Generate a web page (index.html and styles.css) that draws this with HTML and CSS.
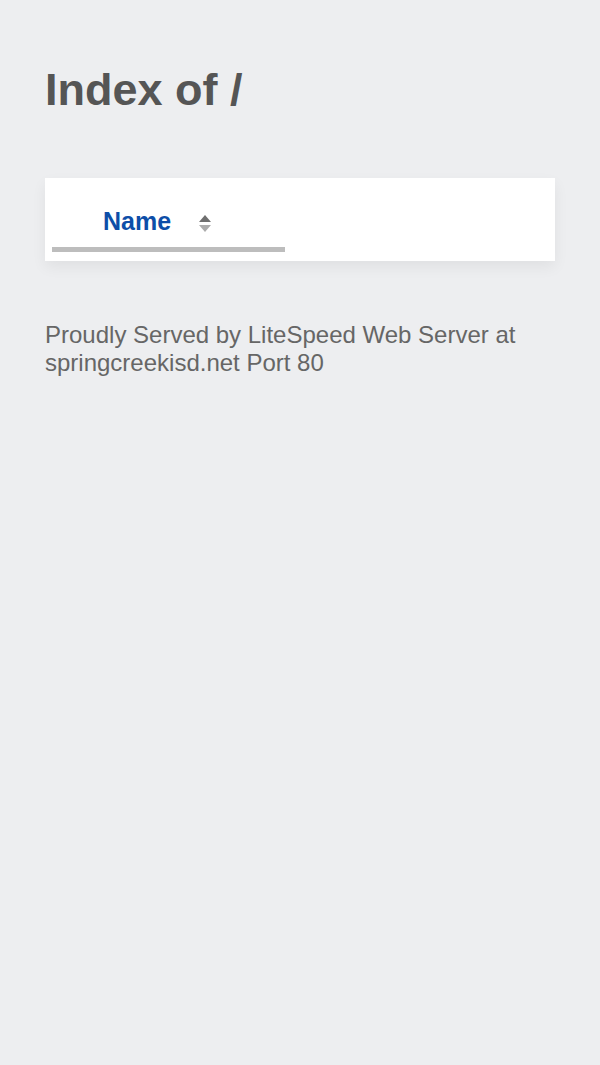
FILE: index.html
```html
<!DOCTYPE html>
<html lang="en">
<head>
    <meta charset="UTF-8">
    <meta name="viewport" content="width=device-width, initial-scale=1.0">
    <title>Index of /</title>
    <link rel="stylesheet" href="styles.css">
</head>
<body>

    <!-- Page heading -->
    <h1 class="page-title">Index of /</h1>

    <!-- Directory listing -->
    <div class="listing">
        <table class="listing-table">
            <thead>
                <tr>
                    <th class="col-name">
                        <a href="#" class="sort-link">
                            <span>Name</span>
                            <svg class="sort-icon" width="12" height="18" viewBox="0 0 12 18">
                                <polygon points="6,1 12,8 0,8" fill="#6f6f6f"/>
                                <polygon points="0,11 12,11 6,18" fill="#acacac"/>
                            </svg>
                        </a>
                    </th>
                </tr>
            </thead>
            <tbody></tbody>
        </table>
    </div>

    <!-- Server signature -->
    <p class="server-info">Proudly Served by LiteSpeed Web Server at springcreekisd.net Port 80</p>

</body>
</html>
```

FILE: styles.css
```css
/* General reset */
* {
    margin: 0;
    padding: 0;
    box-sizing: border-box;
}

:root {
    --background: #edeef0;
    --title: #555555;
    --link: #0d4ea8;
    --muted: #666666;
    --rule: #bdbdbd;
}

body {
    font-family: "Liberation Sans", Arial, sans-serif;
    background-color: var(--background);
    color: var(--muted);
    padding: 64px 45px 0 45px;
}

/* Heading */
.page-title {
    font-size: 45px;
    font-weight: bold;
    color: var(--title);
    line-height: 52px;
    margin-bottom: 62px;
}

/* Listing box */
.listing {
    background-color: #ffffff;
    padding: 0 7px 9px 7px;
    box-shadow: rgba(0, 0, 0, 0.06) 0px 6px 14px;
}

.listing-table {
    border-collapse: collapse;
}

.col-name {
    width: 233px;
    padding: 28px 0 0 0;
    border-bottom: 5px solid var(--rule);
    text-align: left;
}

.sort-link {
    display: flex;
    align-items: center;
    gap: 28px;
    padding-left: 51px;
    padding-bottom: 11px;
    text-decoration: none;
    color: var(--link);
    font-size: 25px;
    font-weight: bold;
    line-height: 30px;
}

.sort-icon {
    margin-top: 3px;
}

/* Footer text */
.server-info {
    margin-top: 60px;
    font-size: 24px;
    line-height: 28px;
    color: var(--muted);
}
```
